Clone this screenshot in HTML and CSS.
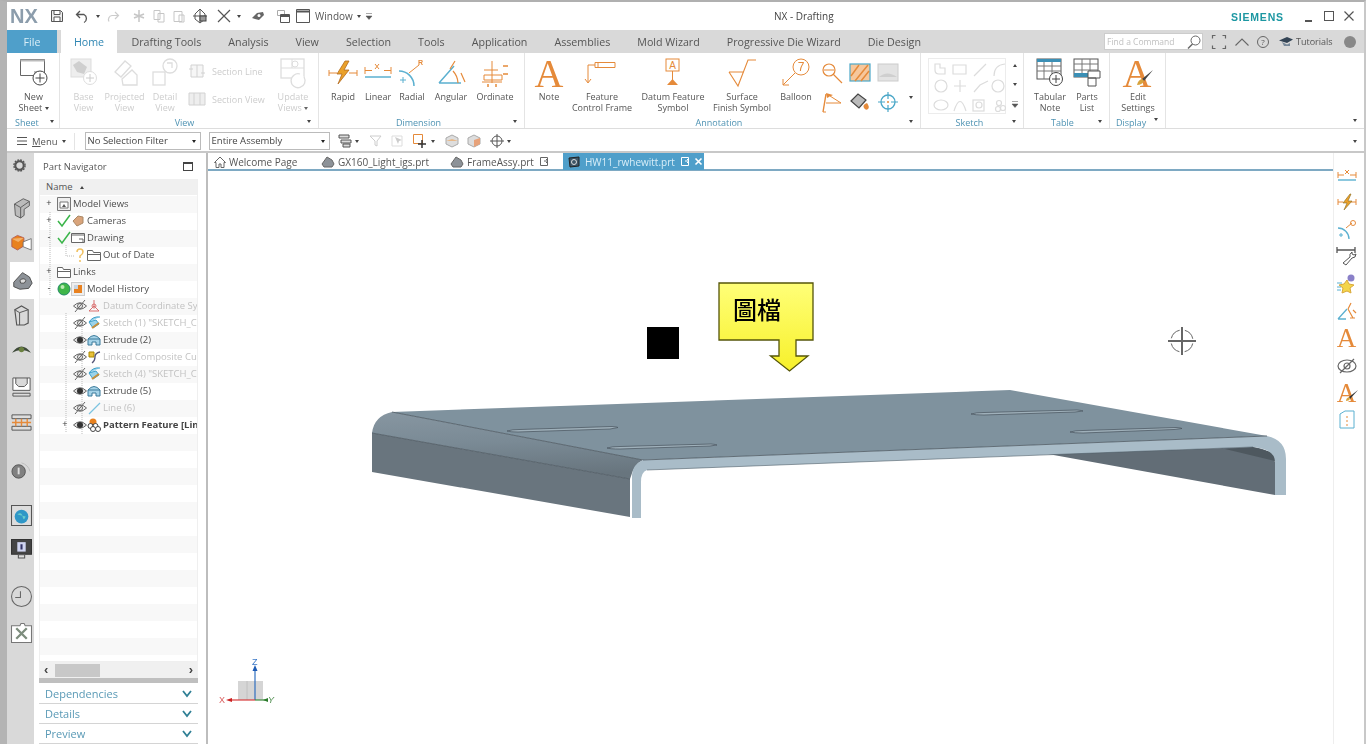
FILE: index.html
```html
<!DOCTYPE html>
<html lang="en">
<head>
<meta charset="utf-8">
<title>NX - Drafting</title>
<link rel="stylesheet" href="styles.css">
</head>
<body>
<div class="app">
  <header class="titlebar soft">
    <span class="nx">NX</span>
    <div class="qat">
      <svg class="q q-save" viewBox="0 0 14 14"><path d="M1.500 1.500h9l2 2v9h-11z" fill="#eee" stroke="#555"/><path d="M4 2v3.500h6V2M4 12V8h6v4" fill="#fff" stroke="#555"/></svg>
      <svg class="q q-undo" viewBox="0 0 16 14"><path d="M5 2 1.500 5.500 5 9M2 5.500h7a4.500 4.500 0 0 1 0 8" fill="none" stroke="#555" stroke-width="1.300"/></svg>
      <i class="caret q-c1"></i>
      <svg class="q q-redo" viewBox="0 0 14 14"><path d="M9 3l3.500 3.500L9 10M12 6.500H6a4 4 0 0 0-3 6" fill="none" stroke="#ccc" stroke-width="1.200"/></svg>
      <svg class="q q-cut" viewBox="0 0 14 14"><path d="M7 1v12M2 5l10 4M2 9l10-4" fill="none" stroke="#c6c6c6" stroke-width="1.500"/></svg>
      <svg class="q q-copy" viewBox="0 0 14 14"><path d="M2 1.500h6v9H2zM6 4.500h6v8.500H6z" fill="#fff" stroke="#c6c6c6"/></svg>
      <svg class="q q-paste" viewBox="0 0 14 14"><path d="M2 2.500h8v10H2zM7 6h5v7H7z" fill="#fff" stroke="#c6c6c6"/></svg>
      <svg class="q q-move" viewBox="0 0 16 16"><path d="M8 1v14M1 8h14M8 1 3 6v5l5 4 5-4V6z" fill="none" stroke="#555"/><rect x="8" y="8" width="6" height="5" fill="#999" stroke="#444"/></svg>
      <svg class="q q-x" viewBox="0 0 14 14"><path d="M1 1l12 12M13 1 1 13" stroke="#555" stroke-width="1.200"/></svg>
      <i class="caret q-c2"></i>
      <svg class="q q-eye" viewBox="0 0 14 12"><path d="M1 8l5-5 6-1 1 3-5 5-4-1z" fill="#666"/><circle cx="8" cy="5.500" r="1.500" fill="#fff"/></svg>
      <svg class="q q-win1" viewBox="0 0 14 14"><path d="M1.500 1.500h7v5h-7z" fill="#fff" stroke="#aaa"/><path d="M4.500 5.500h9v8h-9z" fill="#fff" stroke="#555"/><path d="M4.500 7h9" stroke="#555" stroke-width="2"/></svg>
      <svg class="q q-win2" viewBox="0 0 14 14"><path d="M.5.500h13v13H.5z" fill="#fff" stroke="#555"/><path d="M.5 2.500h13" stroke="#555" stroke-width="2"/></svg>
      <span class="win-label">Window</span>
      <i class="caret q-c3"></i>
      <svg class="q q-more" viewBox="0 0 6 7"><path d="M0 .5h6M0 3h6L3 6.500z" fill="#555" stroke="#555" stroke-width=".5"/></svg>
    </div>
    <span class="doc-title">NX - Drafting</span>
    <span class="siemens">SIEMENS</span>
    <div class="win-ctrl">
      <span class="min"></span>
      <span class="max"></span>
      <svg class="close" viewBox="0 0 10 10"><path d="M.5.500l9 9M9.500.500l-9 9" stroke="#555" stroke-width="1.200"/></svg>
    </div>
  </header>

  <nav class="tabbar soft">
    <span class="tab file">File</span>
    <span class="tab home">Home</span>
    <span class="tab">Drafting Tools</span>
    <span class="tab">Analysis</span>
    <span class="tab">View</span>
    <span class="tab">Selection</span>
    <span class="tab">Tools</span>
    <span class="tab">Application</span>
    <span class="tab">Assemblies</span>
    <span class="tab">Mold Wizard</span>
    <span class="tab">Progressive Die Wizard</span>
    <span class="tab">Die Design</span>
    <div class="tab-right">
      <div class="search"><span>Find a Command</span>
        <svg class="s-ico" viewBox="0 0 14 14"><circle cx="8.500" cy="5.500" r="4.500" fill="#fff" stroke="#666"/><path d="M5.500 9 1 13.500" stroke="#666" stroke-width="1.500"/></svg>
      </div>
      <svg class="r-full" viewBox="0 0 14 14"><path d="M.5 3.500v-3h3M10.500.500h3v3M.5 10.500v3h3M10.500 13.500h3v-3" fill="none" stroke="#666" stroke-width="1.200"/></svg>
      <svg class="r-up" viewBox="0 0 14 8"><path d="M.5 7.500 7 1l6.500 6.500" fill="none" stroke="#666" stroke-width="1.100"/></svg>
      <span class="r-help">?</span>
      <svg class="r-hat" viewBox="0 0 14 10"><path d="M0 3.500 8 0l6 2.500L8 6z" fill="#345"/><path d="M3 5l5 2.500 3-1.500v3H5z" fill="#789"/></svg>
      <span class="r-tut">Tutorials</span>
      <span class="r-dot"></span>
    </div>
  </nav>

  <section class="ribbon soft">
    <div class="group g-sheet">
      <div class="items">
        <div class="big w53">
          <svg class="ico" viewBox="0 0 30 30"><path d="M1.500 1.500h24v16h-24z" fill="#fff" stroke="#666"/><path d="M1.500 1.500h24v2h-24z" fill="#bbb"/><rect x="15" y="13" width="9" height="5" fill="#bbb"/><circle cx="21" cy="20" r="7" fill="#fff" stroke="#444"/><path d="M21 15.500v9M16.500 20h9" stroke="#444"/></svg>
          <span class="lbl">New<br>Sheet <b class="tri"></b></span>
        </div>
      </div>
      <div class="g-label">Sheet<i class="caret g-c"></i></div>
    </div>
    <div class="group g-view">
      <div class="items">
        <div class="big w41 off">
          <svg class="ico" viewBox="0 0 30 30"><rect x="2" y="1" width="20" height="18" fill="#eee" stroke="#ddd"/><path d="M4 7l6-4 8 6-3 7-7-2z" fill="#cfcfcf"/><circle cx="21" cy="20" r="6.500" fill="#fff" stroke="#ddd"/><path d="M21 16v8M17 20h8" stroke="#ccc"/></svg>
          <span class="lbl">Base<br>View</span>
        </div>
        <div class="big w41 off">
          <svg class="ico" viewBox="0 0 30 30"><path d="M5 14 15 3l6 5-10 11zM12 21l10-9 5 5v10H13z" fill="#fff" stroke="#ddd" stroke-width="1.300"/></svg>
          <span class="lbl">Projected<br>View</span>
        </div>
        <div class="big w40 off">
          <svg class="ico" viewBox="0 0 30 30"><rect x="3" y="14" width="12" height="13" fill="#fff" stroke="#ddd" stroke-width="1.300"/><circle cx="20" cy="8" r="7" fill="#fff" stroke="#ddd" stroke-width="1.300"/><path d="M17 5h5v5" fill="none" stroke="#ddd" stroke-width="1.300"/></svg>
          <span class="lbl">Detail<br>View</span>
        </div>
        <div class="small-col w82 off">
          <div class="sm"><svg class="si" viewBox="0 0 18 14"><path d="M3 1h12v12H3z M1 5h4M13 9h4M9 1v12" fill="#f6f6f6" stroke="#d2d2d2"/></svg><span>Section Line</span></div>
          <div class="sm"><svg class="si" viewBox="0 0 18 14"><path d="M1 1h16v12H1zM6 1v12M12 1v12" fill="#eee" stroke="#d2d2d2"/></svg><span>Section View</span></div>
        </div>
        <div class="big w52 off">
          <svg class="ico" viewBox="0 0 30 30"><rect x="3" y="1" width="23" height="19" fill="#fff" stroke="#ddd" stroke-width="1.300"/><path d="M3 10h23M14 1v9" stroke="#ddd"/><circle cx="17" cy="6" r="3" fill="none" stroke="#ddd"/><path d="M26 19a7 7 0 1 1-4-3" fill="#fff" stroke="#ddd" stroke-width="1.300"/></svg>
          <span class="lbl">Update<br>Views <b class="tri"></b></span>
        </div>
      </div>
      <div class="g-label">View<i class="caret g-c"></i></div>
    </div>
    <div class="group g-dim">
      <div class="items">
        <div class="big w36">
          <svg class="ico" viewBox="0 0 30 30"><path d="M1 15h8M21 15h8M1 12v6M29 12v6" stroke="#e58a3a"/><path d="M17 3 9 16h5l-4 10 11-14h-5l5-9z" fill="#eaa12a" stroke="#b36a20" stroke-width=".8"/></svg>
          <span class="lbl">Rapid</span>
        </div>
        <div class="big w34">
          <svg class="ico" viewBox="0 0 30 30"><path d="M2 19h26" stroke="#5bb0d0" stroke-width="1.500"/><path d="M2 9v7M28 9v7M2 12.500h7M21 12.500h7" stroke="#e58a3a"/><path d="M12 6l4 5M16 6l-4 5" stroke="#e58a3a"/></svg>
          <span class="lbl">Linear</span>
        </div>
        <div class="big w34">
          <svg class="ico" viewBox="0 0 30 30"><path d="M2 13a15 15 0 0 1 15 15" fill="none" stroke="#5bb0d0" stroke-width="1.500"/><path d="M12 15 22 7" stroke="#e58a3a"/><path d="M3 22h6M6 19v6" stroke="#5bb0d0"/><text x="21" y="7" class="svgt">R</text></svg>
          <span class="lbl">Radial</span>
        </div>
        <div class="big w44">
          <svg class="ico" viewBox="0 0 30 30"><path d="M3 25 18 8M3 25h22" stroke="#5bb0d0" stroke-width="1.500"/><path d="M22 25a19 19 0 0 0-5-12M19 3l-5 8M25 15l4 9" fill="none" stroke="#e58a3a" stroke-width="1.200"/></svg>
          <span class="lbl">Angular</span>
        </div>
        <div class="big w44">
          <svg class="ico" viewBox="0 0 30 30"><path d="M4 17h18v5H4z" fill="none" stroke="#e58a3a"/><path d="M2 24h20M12 3v22M4 12h14" stroke="#e58a3a"/><path d="M8 26v3M16 26v3M23 8h5M23 16h5" stroke="#e58a3a" stroke-width="1.500"/></svg>
          <span class="lbl">Ordinate</span>
        </div>
      </div>
      <div class="g-label">Dimension<i class="caret g-c"></i></div>
    </div>
    <div class="group g-ann">
      <div class="items">
        <div class="big w38">
          <svg class="ico" viewBox="0 0 30 30"><text x="15" y="29" class="svg-note">A</text></svg>
          <span class="lbl">Note</span>
        </div>
        <div class="big w68">
          <svg class="ico" viewBox="0 0 30 30"><path d="M8 4.500h20v5H8z" fill="#fff" stroke="#e58a3a"/><path d="M11 4v6" stroke="#e58a3a"/><path d="M8 7H1v17M-2 21l3 4 3-4" fill="none" stroke="#e58a3a"/></svg>
          <span class="lbl">Feature<br>Control Frame</span>
        </div>
        <div class="big w74">
          <svg class="ico" viewBox="0 0 30 30"><rect x="8" y="1" width="13" height="12" fill="#fff" stroke="#e58a3a"/><text x="14.500" y="11" class="svga">A</text><path d="M14.500 13v9" stroke="#e58a3a"/><path d="M9 27l5.500-6 5.500 6z" fill="#e58a3a"/></svg>
          <span class="lbl">Datum Feature<br>Symbol</span>
        </div>
        <div class="big w64">
          <svg class="ico" viewBox="0 0 30 30"><path d="M2 14l9 14L21 2h8M2 14h15" fill="none" stroke="#e58a3a" stroke-width="1.100"/></svg>
          <span class="lbl">Surface<br>Finish Symbol</span>
        </div>
        <div class="big w44">
          <svg class="ico" viewBox="0 0 30 30"><circle cx="20" cy="9" r="8" fill="#fff" stroke="#e58a3a"/><text x="20" y="13" class="svgb">7</text><path d="M14 15 2 27M2 21v6h6" fill="none" stroke="#e58a3a"/></svg>
          <span class="lbl">Balloon</span>
        </div>
        <div class="grid-mini">
          <svg class="mini" viewBox="0 0 22 22"><circle cx="8" cy="8" r="6" fill="none" stroke="#e58a3a" stroke-width="1.200"/><path d="M3 8h10M12 12l9 9" stroke="#e58a3a" stroke-width="1.200"/></svg>
          <svg class="mini" viewBox="0 0 22 22"><rect x="1" y="2" width="20" height="17" fill="#f6c79c" stroke="#4ba7c8" stroke-width="1.200"/><path d="M2 14 10 3M6 19 19 3M12 19l8-10" stroke="#e58a3a" stroke-width="1.500"/></svg>
          <svg class="mini" viewBox="0 0 22 22"><rect x="1" y="2" width="20" height="17" fill="#e3e3e3" stroke="#ccc"/><path d="M2 15q8-7 18 0" fill="#cfcfcf"/></svg>
          <svg class="mini" viewBox="0 0 22 22"><path d="M2 21 5 3" stroke="#e58a3a" stroke-width="1.400"/><path d="M5 2l7 2-6 3z" fill="#e58a3a"/><path d="M9 5l11 7H5" fill="#fff" stroke="#e58a3a"/><path d="M2 21h3" stroke="#e58a3a"/></svg>
          <svg class="mini" viewBox="0 0 22 22"><path d="M2 10l7-7 8 6-7 8z" fill="#bbb" stroke="#444" stroke-width="1.200"/><path d="M18 12q3 4 1 6t-4-1 3-5z" fill="#e58a3a"/></svg>
          <svg class="mini" viewBox="0 0 22 22"><circle cx="11" cy="11" r="7" fill="#fff" stroke="#4ba7c8" stroke-width="1.300"/><path d="M11 1v7M11 14v7M1 11h7M14 11h7" stroke="#4ba7c8" stroke-width="1.200"/><circle cx="11" cy="11" r="1" fill="#e58a3a"/></svg>
        </div>
        <i class="caret a-more"></i>
      </div>
      <div class="g-label">Annotation<i class="caret g-c"></i></div>
    </div>
    <div class="group g-sk">
      <div class="items">
        <div class="sk-box">
          <svg class="sk-ico" viewBox="0 0 76 54"><g fill="none" stroke="#dcdcdc" stroke-width="1.200"><path d="M5 5v6q0 4 4 4h6v-6h-5V5zM23 6h13v9H23zM44 17 56 5M64 17q0-11 11-12"/><circle cx="11" cy="27" r="6"/><path d="M24 27h12M30 21v12M44 33l6-7 8-4"/><circle cx="68" cy="27" r="6"/><ellipse cx="11" cy="46" rx="7" ry="5"/><path d="M24 52q6-19 12 0"/><rect x="43" y="41" width="11" height="11"/><circle cx="49" cy="46" r="3"/><circle cx="69" cy="44" r="2.500"/><circle cx="73" cy="49" r="2.500"/><circle cx="68" cy="50" r="2.500"/></g></svg>
        </div>
        <div class="sk-arrows"><i class="caret up"></i><i class="caret"></i><svg class="sk-m" viewBox="0 0 6 7"><path d="M0 .5h6M0 3h6L3 6.500z" fill="#555" stroke="#555" stroke-width=".5"/></svg></div>
      </div>
      <div class="g-label">Sketch<i class="caret g-c"></i></div>
    </div>
    <div class="group g-table">
      <div class="items">
        <div class="big w44">
          <svg class="ico" viewBox="0 0 30 30"><rect x="2" y="1" width="24" height="20" fill="#fff" stroke="#555"/><rect x="2" y="1" width="24" height="3" fill="#3b8fb5"/><path d="M2 8h24M2 13h24M9 4v17M17 4v17" stroke="#777"/><circle cx="21" cy="21" r="6.500" fill="#fff" stroke="#444"/><path d="M21 17v8M17 21h8" stroke="#444"/></svg>
          <span class="lbl">Tabular<br>Note</span>
        </div>
        <div class="big w30">
          <svg class="ico" viewBox="0 0 30 30"><rect x="2" y="1" width="24" height="18" fill="#fff" stroke="#555"/><path d="M2 6h24M2 12h24M10 1v18M18 1v18" stroke="#777"/><rect x="2" y="15" width="16" height="4" fill="#3b8fb5"/><path d="M16 13h12v7H16zM16 20h8v8h-8z" fill="#fff" stroke="#555"/></svg>
          <span class="lbl">Parts<br>List</span>
        </div>
      </div>
      <div class="g-label">Table<i class="caret g-c"></i></div>
    </div>
    <div class="group g-disp">
      <div class="items">
        <div class="big w56">
          <svg class="ico" viewBox="0 0 30 30"><text x="14" y="29" class="svg-note">A</text><path d="M30 12 19 21l2 2z" fill="#444"/><path d="M19 21q-4 1-5 6 5 0 7-4z" fill="#d8a33d"/></svg>
          <span class="lbl">Edit<br>Settings</span>
        </div>
      </div>
      <div class="g-label">Display<i class="caret g-c"></i></div>
    </div>
    <i class="caret rib-more"></i>
  </section>

  <section class="selbar soft">
    <svg class="menu-ico" viewBox="0 0 10 8"><path d="M0 .5h10M0 4h10M0 7.500h10" stroke="#555"/></svg>
    <span class="menu-lbl"><u>M</u>enu</span><i class="caret"></i>
    <span class="sep"></span>
    <div class="combo c1">No Selection Filter<i class="caret dk"></i></div>
    <div class="combo c2">Entire Assembly<i class="caret dk"></i></div>
    <svg class="sb sb1" viewBox="0 0 14 14"><path d="M1 1h10v3H1zM3 6h10v3H3zM5 10h7v3H5z" fill="#ddd" stroke="#555"/></svg><i class="caret"></i>
    <svg class="sb sb2" viewBox="0 0 14 14"><path d="M1 2h11L8 7v5l-2-1V7z" fill="none" stroke="#ccc"/></svg>
    <svg class="sb sb3" viewBox="0 0 14 14"><path d="M2 2h10v10H2z" fill="none" stroke="#ddd"/><path d="M5 3l3 7 1-3 3-1z" fill="#ccc"/></svg>
    <svg class="sb sb4" viewBox="0 0 16 16"><path d="M1.500 1.500h9v9h-9z" fill="#fff" stroke="#e58a3a"/><path d="M10 7v8M6 11h8" stroke="#333" stroke-width="1.500"/></svg><i class="caret"></i>
    <svg class="sb sb5" viewBox="0 0 14 14"><path d="M7 1l6 3v6l-6 3-6-3V4z" fill="#ddd" stroke="#aaa"/><path d="M1 7l6-2 6 2" fill="#e7b98a"/></svg>
    <svg class="sb sb6" viewBox="0 0 14 14"><path d="M7 1l6 3v6l-6 3-6-3V4z" fill="#ddd" stroke="#aaa"/><path d="M7 6l6-2v6l-6 3z" fill="#e7a27a"/></svg>
    <svg class="sb sb7" viewBox="0 0 14 14"><circle cx="7" cy="7" r="5" fill="none" stroke="#555"/><path d="M7 0v14M0 7h14" stroke="#555"/></svg><i class="caret"></i>
    <i class="caret sel-more"></i>
  </section>

  <main class="main">
    <aside class="rail soft">
      <div class="rb"><svg class="rail-g" viewBox="0 0 14 14"><circle cx="7" cy="7" r="4.500" fill="none" stroke="#555" stroke-width="2.200"/><circle cx="7" cy="7" r="6" fill="none" stroke="#555" stroke-width="1.500" stroke-dasharray="2 1.140"/></svg></div>
      <div class="rb"><svg class="ri" viewBox="0 0 22 24"><path d="M3 8l10-6 7 3v5l-6 4v7l-4 3-6-3z" fill="#bbb" stroke="#555"/><path d="M3 8l7 4 10-7M10 12v12" fill="none" stroke="#555"/></svg></div>
      <div class="rb"><svg class="ri" viewBox="0 0 26 24"><path d="M1 6l7-4 8 3v10l-8 5-7-4z" fill="#e8811f" stroke="#a55"/><path d="M1 6l8 4 7-5" fill="#f2b06a"/><path d="M15 10l10-4v14l-10-4z" fill="#fff" stroke="#666"/></svg></div>
      <div class="rb rail-act"><svg class="ri" viewBox="0 0 24 22"><path d="M2 13 12 2l8 5 3 7-4 6-10 1-7-3z" fill="#8d9298" stroke="#444"/><path d="M9 11q4-4 7 0l-2 3h-4z" fill="#ddd" stroke="#444"/></svg></div>
      <div class="rb"><svg class="ri" viewBox="0 0 18 22"><path d="M2 5l7-4 7 4v14l-4 2H4z" fill="none" stroke="#555" stroke-width="1.200"/><path d="M2 5l5 3v13M7 8l9-3" fill="none" stroke="#555"/></svg></div>
      <div class="rb"><svg class="ri" viewBox="0 0 20 12"><path d="M1 10q9-12 18 0-9-5-18 0z" fill="#3e4a3a"/><circle cx="10" cy="7" r="2.500" fill="#6a8040"/></svg></div>
      <div class="rb"><svg class="ri" viewBox="0 0 20 22"><path d="M1 1h18v13H1zM4 1v6l3 3h6l3-3V1" fill="#fff" stroke="#555"/><path d="M1 17h18v3H1z" fill="#ddd" stroke="#555"/></svg></div>
      <div class="rb"><svg class="ri" viewBox="0 0 22 18"><path d="M1 1h20v4H1zM1 13h20v4H1z" fill="#ddd" stroke="#555"/><path d="M1 9h20M5 5v8M11 5v8M17 5v8" stroke="#e58a3a" stroke-width="1.500"/></svg></div>
      <div class="rb"><svg class="ri" viewBox="0 0 22 20"><circle cx="8" cy="11" r="7" fill="#808080" stroke="#555"/><path d="M8 7v7" stroke="#ddd" stroke-width="2"/><path d="M11 2q7 2 9 9" fill="none" stroke="#bbb"/></svg></div>
      <div class="rb"><svg class="ri" viewBox="0 0 20 20"><path d="M.5.500h19v19H.5z" fill="#ddd" stroke="#555"/><circle cx="10" cy="11" r="6.500" fill="#2f97c7"/><path d="M6 9q4-3 5 2t3 0" fill="#6cc"/></svg></div>
      <div class="rb"><svg class="ri" viewBox="0 0 20 20"><path d="M.5.500h19v14H.5z" fill="#444" stroke="#333"/><rect x="6" y="3" width="8" height="9" fill="#cfd4f0"/><path d="M9 5h2v5H9z" fill="#336"/><path d="M7 15h6v3H7z" fill="#ddd" stroke="#555"/></svg></div>
      <div class="rb"><svg class="ri" viewBox="0 0 20 20"><circle cx="10" cy="10" r="9.500" fill="none" stroke="#666"/><path d="M9 5v6H4" fill="none" stroke="#666"/></svg></div>
      <div class="rb"><svg class="ri" viewBox="0 0 20 20"><path d="M.5 3.500h8l1-2h3l1 2h6v16H.5z" fill="#fff" stroke="#777"/><path d="M5 6l10 10M15 6 5 16" stroke="#7d8d7d" stroke-width="2.200"/></svg></div>
    </aside>

    <section class="nav soft">
      <div class="nav-head"><span>Part Navigator</span><span class="nav-max"></span></div>
      <div class="tree">
        <div class="tree-head">Name <i class="caret up dk"></i></div>
        <svg class="tree-lines" viewBox="0 0 60 240"><path d="M9 17v84M41 130v110M25 50v11h9M25 118v120" fill="none" stroke="#bbb" stroke-dasharray="1 1"/></svg>
        <div class="row r0"><b class="exp">+</b><svg class="ti" viewBox="0 0 14 14"><path d="M.5.500h13v13H.5z" fill="#eee" stroke="#777"/><path d="M3 5h8v6H3z" fill="#fff" stroke="#777"/><path d="M5 10l2-3 2 3z" fill="#555"/></svg><span>Model Views</span></div>
        <div class="row r0"><b class="exp">+</b><svg class="ti" viewBox="0 0 14 14"><path d="M1 7l4 5 8-11" fill="none" stroke="#3bb54a" stroke-width="1.500"/></svg><svg class="ti" viewBox="0 0 14 14"><path d="M2 7l5-5 5 1v6l-6 3z" fill="#d9a47b" stroke="#a86"/></svg><span>Cameras</span></div>
        <div class="row r0"><b class="exp">-</b><svg class="ti" viewBox="0 0 14 14"><path d="M1 7l4 5 8-11" fill="none" stroke="#3bb54a" stroke-width="1.500"/></svg><svg class="ti" viewBox="0 0 14 14"><path d="M.5 2.500h13v9H.5z" fill="#fff" stroke="#666"/><path d="M.5 4h13M8 8h4v3" fill="none" stroke="#666"/></svg><span>Drawing</span></div>
        <div class="row r2"><svg class="ti" viewBox="0 0 14 14"><path d="M4 4q0-3 3-3t3 3q0 2-3 4v2" fill="none" stroke="#f0c060" stroke-width="1.500"/><circle cx="7" cy="13" r="1" fill="#f0c060"/></svg><svg class="ti" viewBox="0 0 14 14"><path d="M.5 2.500h5l1 2h7v8H.5z M.5 6.500h13" fill="#fff" stroke="#666"/></svg><span>Out of Date</span></div>
        <div class="row r0"><b class="exp">+</b><svg class="ti" viewBox="0 0 14 14"><path d="M.5 2.500h5l1 2h7v8H.5z M.5 6.500h13" fill="#fff" stroke="#666"/></svg><span>Links</span></div>
        <div class="row r0"><b class="exp">-</b><svg class="ti" viewBox="0 0 14 14"><circle cx="7" cy="7" r="6" fill="#3fb649" stroke="#286"/><circle cx="5.500" cy="5" r="2" fill="#bdeab5"/></svg><svg class="ti" viewBox="0 0 14 14"><rect x=".5" y=".5" width="13" height="13" fill="#eee" stroke="#ccc"/><path d="M3 3h8v8H3z" fill="#e8811f"/><path d="M3 3h4v4H3z" fill="#c9d4e0"/></svg><span>Model History</span></div>
        <div class="row r2 dim"><svg class="ti" viewBox="0 0 14 14"><use href="#eyeoff"/></svg><svg class="ti" viewBox="0 0 14 14"><path d="M7 1v6L2 12M7 7l5 5M2 12h10" fill="none" stroke="#d96f6f"/><circle cx="7" cy="7" r="2" fill="none" stroke="#d96f6f"/></svg><span>Datum Coordinate Sy</span></div>
        <div class="row r2 dim"><svg class="ti" viewBox="0 0 14 14"><use href="#eyeoff"/></svg><svg class="ti" viewBox="0 0 14 14"><path d="M2 6q4-6 11-5M2 6l4 6 6-4-3-4z" fill="#9ad3ea" stroke="#3d9fca"/><path d="M5 12l7-5" stroke="#c98f3a" stroke-width="2"/></svg><span>Sketch (1) "SKETCH_C</span></div>
        <div class="row r2"><svg class="ti" viewBox="0 0 14 14"><use href="#eyeon"/></svg><svg class="ti" viewBox="0 0 14 14"><use href="#extr"/></svg><span>Extrude (2)</span></div>
        <div class="row r2 dim"><svg class="ti" viewBox="0 0 14 14"><use href="#eyeoff"/></svg><svg class="ti" viewBox="0 0 14 14"><path d="M2 2h5v5H2z" fill="#e9c13b" stroke="#a80"/><path d="M5 13q3-2 3-6t5-5" fill="none" stroke="#557" stroke-width="1.300"/></svg><span>Linked Composite Cu</span></div>
        <div class="row r2 dim"><svg class="ti" viewBox="0 0 14 14"><use href="#eyeoff"/></svg><svg class="ti" viewBox="0 0 14 14"><path d="M2 6q4-6 11-5M2 6l4 6 6-4-3-4z" fill="#9ad3ea" stroke="#3d9fca"/><path d="M5 12l7-5" stroke="#c98f3a" stroke-width="2"/></svg><span>Sketch (4) "SKETCH_C</span></div>
        <div class="row r2"><svg class="ti" viewBox="0 0 14 14"><use href="#eyeon"/></svg><svg class="ti" viewBox="0 0 14 14"><use href="#extr"/></svg><span>Extrude (5)</span></div>
        <div class="row r2 dim"><svg class="ti" viewBox="0 0 14 14"><use href="#eyeoff"/></svg><svg class="ti" viewBox="0 0 14 14"><path d="M2 13 13 2" stroke="#7cc3e0" stroke-width="1.300"/></svg><span>Line (6)</span></div>
        <div class="row r1 strong"><b class="exp">+</b><svg class="ti" viewBox="0 0 14 14"><use href="#eyeon"/></svg><svg class="ti" viewBox="0 0 14 14"><circle cx="6" cy="4" r="3.500" fill="#e8811f"/><g fill="#fff" stroke="#444"><circle cx="3.500" cy="8" r="2.500"/><circle cx="8.500" cy="8" r="2.500"/><circle cx="6" cy="11" r="2.500"/><circle cx="11" cy="11" r="2.500"/></g></svg><span>Pattern Feature [Lin</span></div>
      </div>
      <div class="hscroll"><span class="arrow">&#8249;</span><span class="thumb"></span><span class="arrow">&#8250;</span></div>
      <div class="hbar"></div>
      <div class="acc"><span>Dependencies</span><svg class="chev" viewBox="0 0 10 7"><path d="M1 1l4 5 4-5" fill="none" stroke="#2f7f95" stroke-width="1.800"/></svg></div>
      <div class="acc"><span>Details</span><svg class="chev" viewBox="0 0 10 7"><path d="M1 1l4 5 4-5" fill="none" stroke="#2f7f95" stroke-width="1.800"/></svg></div>
      <div class="acc"><span>Preview</span><svg class="chev" viewBox="0 0 10 7"><path d="M1 1l4 5 4-5" fill="none" stroke="#2f7f95" stroke-width="1.800"/></svg></div>
    </section>

    <section class="work">
      <div class="doctabs soft">
        <div class="dt d1"><svg class="dti" viewBox="0 0 12 12"><path d="M6 1 .5 6.500H2V11.500h3V8h2v3.500h3v-5h1.500z" fill="#fff" stroke="#666"/></svg><span>Welcome Page</span></div>
        <div class="dt d2"><svg class="dti w14" viewBox="0 0 14 12"><path d="M1 8l5-7 5 3 2 4-2 3H3z" fill="#8d9298" stroke="#666"/></svg><span>GX160_Light_igs.prt</span></div>
        <div class="dt d3"><svg class="dti w14" viewBox="0 0 14 12"><path d="M1 8l5-7 5 3 2 4-2 3H3z" fill="#8d9298" stroke="#666"/></svg><span>FrameAssy.prt</span><svg class="dts" viewBox="0 0 10 11"><path d="M1.500 1.500h7v8h-7z" fill="#fff" stroke="#666"/><path d="M5 5h4M7 3l2 2-2 2" fill="none" stroke="#666"/></svg></div>
        <div class="dt active"><svg class="dti w14" viewBox="0 0 14 12"><path d="M1 2l10-1v9l-9 1z" fill="#3d5566" stroke="#222"/><circle cx="6" cy="6" r="2.500" fill="none" stroke="#ddd"/></svg><span>HW11_rwhewitt.prt</span><svg class="dts" viewBox="0 0 10 11"><path d="M1.500 1.500h7v8h-7z" fill="#4a9cc7" stroke="#fff"/><path d="M5 5h4M7 3l2 2-2 2" fill="none" stroke="#fff"/></svg><svg class="dtx" viewBox="0 0 9 9"><path d="M1.500 1.500l6 6M7.500 1.500l-6 6" stroke="#fff" stroke-width="1.600"/></svg></div>
      </div>
      <div class="canvas">
        <svg class="model" viewBox="208 171 1125 573">
          <defs>
            <linearGradient id="bend" x1="0" y1="0" x2="0.12" y2="1"><stop offset="0" stop-color="#8796a1"/><stop offset=".5" stop-color="#7a8a95"/><stop offset="1" stop-color="#68757e"/></linearGradient>
          </defs>
          <path d="M392 412 1010 390 1267 436 643 460Z" fill="#7f929e"/>
          <path d="M372 433Q374 416 392 412L643 460Q634 464 630 479Z" fill="url(#bend)"/>
          <path d="M372 433 630 479 630 517 372 472Z" fill="#69757e"/>
          <path d="M372 433 630 479M392 412 643 460" stroke="#4c5861" stroke-width=".8" fill="none"/>
          <path d="M1048 454 1253 447Q1272 449 1275 462V495Z" fill="#626d76"/>
          <path d="M1225 449 1275 461V453L1253 447Z" fill="#4e585f"/>
          <path d="M643 460 1267 436Q1286 440 1286 459V495H1275V461Q1274 449 1253 447L647 470Q641 472 641 482V518H632V475Q632 465 643 460Z" fill="#a9bcc8"/>
          <path d="M643 460 1267 436" stroke="#4c5861" stroke-width=".8" fill="none"/>
          <path d="M647 470 1253 447" stroke="#50606a" stroke-width=".6" fill="none"/>
          <g fill="#9fb0ba" stroke="#46525b" stroke-width=".7">
            <path d="M507 431Q512 429.500 520 429.500L612 426.500Q618 427 618 427.500L610 429 518 432Q510 432 507 431Z"/>
            <path d="M607 448Q612 446.500 620 446.500L711 444Q717 444.500 717 445L710 446 620 449Q610 449 607 448Z"/>
            <path d="M971 414Q976 412.500 984 412.500L1077 410Q1083 410.500 1083 411L1075 412 984 415Q975 415 971 414Z"/>
            <path d="M1070 432Q1075 430.500 1083 430.500L1176 427.500Q1182 428 1182 428.500L1174 429.500 1083 433Q1074 433 1070 432Z"/>
          </g>
          <rect x="647" y="327" width="32" height="32" fill="#000"/>
          <g fill="none" stroke="#666">
            <circle cx="1182" cy="341" r="11" stroke-dasharray="12 5.300" stroke-dashoffset="-2.500"/>
            <path d="M1182 327v28M1168 341h28" stroke-width="2"/>
          </g>
          <g class="soft">
            <path d="M238 681h25v19h-25z" fill="#d5d5d5"/>
            <path d="M247 681v19" stroke="#c0c0c0"/>
            <path d="M255 670v30" stroke="#2f6fc0" stroke-width="1.200"/>
            <path d="M255 665l-2.500 6h5z" fill="#1d5bb5"/>
            <path d="M229 700h26" stroke="#d73b3b" stroke-width="1.200"/>
            <path d="M226 700l6-2v4z" fill="#c22"/>
            <path d="M255 700h13" stroke="#3d8a3d" stroke-width="1.200"/>
            <path d="M268 698l-5 2 5 2z" fill="#2a7a2a"/>
          </g>
        </svg>
        <span class="ax ax-z">Z</span><span class="ax ax-x">X</span><span class="ax ax-y">Y</span>
        <div class="callout">
          <svg class="callout-shape" viewBox="0 0 98 92">
            <defs><linearGradient id="yel" x1="0" y1="0" x2="0" y2="1"><stop offset="0" stop-color="#ffff78"/><stop offset="1" stop-color="#f7f02a"/></linearGradient></defs>
            <path d="M1 1H95V58H78V74H90L71.500 89 52.500 74H61V58H1Z" fill="url(#yel)" stroke="#55550a" stroke-width="1.300"/>
          </svg>
          <span class="callout-text">圖檔</span>
        </div>
      </div>
    </section>

    <aside class="rtools soft">
      <svg class="rt" viewBox="0 0 20 20"><path d="M1 15h18" stroke="#5bb0d0" stroke-width="1.400"/><path d="M1 7v6M19 7v6M1 10h6M13 10h6M8 5l4 4M12 5 8 9" stroke="#e58a3a"/></svg>
      <svg class="rt" viewBox="0 0 20 20"><path d="M1 10h5M14 10h5M1 7v6M19 7v6" stroke="#e58a3a"/><path d="M13 2 6 11h4l-3 7 8-9h-4l3-7z" fill="#eaa12a" stroke="#8a6a20" stroke-width=".6"/></svg>
      <svg class="rt" viewBox="0 0 20 20"><path d="M1 9a11 11 0 0 1 11 11" fill="none" stroke="#5bb0d0" stroke-width="1.300"/><path d="M9 9l6-5" stroke="#e58a3a"/><circle cx="16" cy="4" r="2.500" fill="none" stroke="#e58a3a"/><path d="M2 16h4M4 14v4" stroke="#5bb0d0"/></svg>
      <svg class="rt" viewBox="0 0 20 20"><path d="M0 1v6M18 1v6M0 4h18" stroke="#555" stroke-width="1.300"/><path d="M15 6q-3 2-2 5l-7 6 3 2 6-7q4 0 4-4l-2 1-2-1z" fill="#fff" stroke="#555"/></svg>
      <svg class="rt" viewBox="0 0 20 20"><path d="M10 6l2 4 5 1-4 3 1 5-4-2-5 2 1-5-4-3 5-1z" fill="#f3d54b" stroke="#d9a83a"/><circle cx="14" cy="4" r="3.500" fill="#8a80c8"/><path d="M0 9h5M0 13h4M0 16h4" stroke="#5bb0d0"/></svg>
      <svg class="rt" viewBox="0 0 20 20"><path d="M1 18 10 8M1 18h8" stroke="#5bb0d0" stroke-width="1.300"/><path d="M14 2l-3 6M11 8l5 9M16 9l3 3M13 17h5" stroke="#e58a3a" stroke-width="1.200"/></svg>
      <span class="rt-a">A</span>
      <svg class="rt" viewBox="0 0 20 20"><ellipse cx="10" cy="10" rx="9" ry="6" fill="none" stroke="#666" stroke-width="1.200"/><circle cx="10" cy="10" r="3" fill="none" stroke="#666" stroke-width="1.200"/><path d="M3 17 17 3" stroke="#666" stroke-width="1.200"/></svg>
      <div class="rt-edit"><span class="rt-a">A</span><svg class="rt-br" viewBox="0 0 14 12"><path d="M13 1 4 8l1 2z" fill="#333"/><path d="M4 8q-3 1-3 4 3 0 4-2z" fill="#d8a33d"/></svg></div>
      <svg class="rt" viewBox="0 0 20 20"><path d="M3 4l5-3h9v17H3z" fill="#fff" stroke="#5bb0d0"/><path d="M10 6v2M10 10v2M10 14v2" stroke="#e58a3a"/></svg>
    </aside>
  </main>
</div>
<svg class="defs" aria-hidden="true">
  <symbol id="eyeon" viewBox="0 0 14 14"><path d="M.5 7Q7 .5 13.500 7 7 13.500.5 7z" fill="#ddd" stroke="#666"/><circle cx="7" cy="7" r="3" fill="#333"/></symbol>
  <symbol id="eyeoff" viewBox="0 0 14 14"><path d="M.5 7Q7 .5 13.500 7 7 13.500.5 7z" fill="#eee" stroke="#666"/><circle cx="7" cy="7" r="2.500" fill="none" stroke="#666"/><path d="M2 13 12 1" stroke="#666"/></symbol>
  <symbol id="extr" viewBox="0 0 14 14"><path d="M1 6q6-7 12 0v6H9V9H5v3H1z" fill="#a6d3e8" stroke="#39799a"/><path d="M1 6h12" stroke="#39799a"/></symbol>
</svg>
</body>
</html>
```
FILE: styles.css
```css
* { box-sizing: border-box; }
html, body { margin: 0; height: 100%; overflow: hidden; background: #fff; }
body { font-family: "Open Sans", "Noto Sans", sans-serif; color: #555; }
.app { width: 1366px; height: 744px; border-left: 7px solid #b4b4b4; border-top: 2px solid #b0b0b0; border-right: 2px solid #c8c8c8; display: flex; flex-direction: column; overflow: hidden; background: #fff; }
.soft { filter: blur(.35px); }
.defs { position: absolute; width: 0; height: 0; }
svg { display: block; flex: none; overflow: visible; }
.caret { display: inline-block; width: 0; height: 0; border-left: 2.5px solid transparent; border-right: 2.5px solid transparent; border-top: 3px solid #444; flex: none; }
.caret.up { border-top: 0; border-bottom: 3px solid #444; }

/* title bar */
.titlebar { height: 28px; display: flex; align-items: center; position: relative; flex: none; }
.nx { font: 700 20px "Liberation Sans", sans-serif; color: #8c9dac; margin-left: 3px; width: 40px; }
.qat { display: flex; align-items: center; height: 100%; }
.q { height: 14px; width: 14px; margin-right: 6px; }
.q-undo { width: 16px; margin-left: 5px; margin-right: 5px; }
.q-c1 { margin-right: 6px; }
.q-redo { margin-right: 12px; }
.q-move { width: 16px; height: 16px; margin-right: 9px; }
.q-x { margin-right: 6px; }
.q-c2 { margin-right: 10px; }
.q-eye { margin-right: 11px; }
.q-win2 { margin-right: 5px; }
.win-label { font-size: 10px; margin-right: 4px; }
.q-c3 { margin-right: 5px; }
.q-more { width: 6px; height: 7px; }
.doc-title { position: absolute; left: 767px; font-size: 10px; color: #444; top: 7px; }
.siemens { position: absolute; left: 1224px; top: 9px; font: 700 10.5px "Liberation Sans", sans-serif; color: #1c97a2; letter-spacing: .8px; }
.win-ctrl { position: absolute; left: 1298px; top: 0; height: 100%; display: flex; align-items: center; }
.min { width: 7px; height: 2px; background: #555; margin-top: 9px; margin-right: 12px; }
.max { width: 10px; height: 10px; border: 1px solid #555; margin-right: 10px; }
.close { width: 10px; height: 10px; }

/* ribbon tabs */
.tabbar { height: 23px; background: #d9d9d9; display: flex; align-items: center; flex: none; position: relative; }
.tab { font-size: 10.7px; padding: 0 13.5px; color: #555; height: 100%; line-height: 24px; white-space: nowrap; }
.tab.file { width: 50px; background: #4f9fca; color: #d9eef7; text-align: center; padding: 0; margin-right: 4px; }
.tab.home { background: #fff; color: #2f86b3; width: 56px; text-align: center; padding: 0; margin-right: 1px; }
.tab-right { position: absolute; left: 1097px; top: 0; height: 100%; display: flex; align-items: center; }
.search { width: 99px; height: 17px; background: #fff; border: 1px solid #ccc; display: flex; align-items: center; justify-content: space-between; padding: 0 1px 0 2px; font-size: 8.5px; color: #c0c0c0; white-space: nowrap; }
.s-ico { width: 14px; height: 14px; }
.r-full { width: 14px; height: 14px; margin-left: 9px; }
.r-up { width: 14px; height: 8px; margin-left: 9px; }
.r-help { width: 12px; height: 12px; border: 1px solid #666; border-radius: 50%; font-size: 8px; line-height: 10px; text-align: center; margin-left: 8px; }
.r-hat { width: 14px; height: 10px; margin-left: 10px; }
.r-tut { font-size: 9px; margin-left: 3px; width: 48px; }
.r-dot { width: 12px; height: 12px; border-radius: 50%; background: #888; }

/* ribbon */
.ribbon { height: 76px; display: flex; flex: none; border-bottom: 1px solid #ddd; position: relative; }
.group { display: flex; flex-direction: column; border-right: 1px solid #e4e4e4; position: relative; }
.items { flex: 1; display: flex; align-items: flex-start; padding-top: 5px; }
.g-sheet { width: 53px; }
.g-view { width: 259px; padding-left: 3px; }
.g-dim { width: 206px; padding-left: 6px; }
.g-ann { width: 396px; padding-left: 5px; }
.g-sk { width: 103px; padding-left: 7px; }
.g-table { width: 86px; padding-left: 4px; }
.g-disp { width: 56px; padding-left: 1px; }
.w30 { width: 30px; } .w34 { width: 34px; } .w36 { width: 36px; } .w38 { width: 38px; } .w40 { width: 40px; } .w41 { width: 41px; } .w44 { width: 44px; } .w52 { width: 52px; } .w53 { width: 53px; } .w56 { width: 54px; } .w64 { width: 64px; } .w68 { width: 68px; } .w74 { width: 74px; } .w82 { width: 82px; }
.big { display: flex; flex-direction: column; align-items: center; flex: none; position: relative; }
.ico { width: 30px; height: 30px; }
.lbl { font-size: 9px; line-height: 11px; text-align: center; margin-top: 3px; white-space: nowrap; color: #555; }
.off .lbl, .off .sm span { color: #cdcdcd; }
.tri { display: inline-block; border-left: 2px solid transparent; border-right: 2px solid transparent; border-top: 3px solid #444; vertical-align: middle; }
.off .tri { border-top-color: #666; }
.small-col { display: flex; flex-direction: column; gap: 12px; padding-top: 5px; padding-left: 3px; flex: none; }
.sm { display: flex; align-items: center; gap: 6px; font-size: 9px; white-space: nowrap; height: 16px; }
.si { width: 18px; height: 14px; }
.g-label { height: 12px; text-align: center; font-size: 9px; line-height: 14px; color: #4f93b3; position: relative; padding-right: 12px; }
.g-c { position: absolute; right: 7px; top: 4px; }
.g-sheet .g-label { text-align: left; padding-left: 8px; padding-right: 0; }
.g-sheet .g-c { right: 5px; }
.svg-note { font: 400 40px "Liberation Serif", serif; fill: #e58a3a; text-anchor: middle; }
.svgt { font: 700 7px "Liberation Sans", sans-serif; fill: #e58a3a; }
.svga { font: 400 10px "Liberation Sans", sans-serif; fill: #e58a3a; text-anchor: middle; }
.svgb { font: 400 12px "Liberation Sans", sans-serif; fill: #e58a3a; text-anchor: middle; }
.grid-mini { display: grid; grid-template-columns: repeat(3, 28px); grid-auto-rows: 29px; justify-items: center; align-items: center; width: 84px; flex: none; }
.mini { width: 22px; height: 22px; }
.a-more { margin-left: 7px; margin-top: 38px; }
.sk-box { width: 78px; height: 56px; border: 1px solid #ececec; padding: 0 1px; flex: none; }
.sk-ico { width: 76px; height: 54px; }
.sk-arrows { display: flex; flex-direction: column; align-items: center; justify-content: space-between; margin-left: 4px; height: 50px; padding-top: 6px; width: 9px; }
.sk-m { width: 6px; height: 7px; }
.rib-more { position: absolute; left: 1346px; top: 66px; }
.g-disp .g-label { text-align: left; padding-left: 5px; padding-right: 0; }
.g-disp .g-c { right: 7px; top: 2px; }

/* selection bar */
.selbar { height: 24px; flex: none; display: flex; align-items: center; border-bottom: 2px solid #c8c8c8; position: relative; padding: 2px 0 0 10px; }
.menu-ico { width: 10px; height: 8px; margin-right: 5px; }
.menu-lbl { font-size: 9.5px; margin-right: 4px; }
.sep { width: 1px; height: 17px; background: #e4e4e4; margin: 0 10px 0 8px; }
.combo { height: 18px; border: 1px solid #bbb; font-size: 9.5px; line-height: 16px; padding-left: 2px; color: #444; display: flex; align-items: center; justify-content: space-between; padding-right: 4px; flex: none; }
.c1 { width: 116px; margin-right: 8px; }
.c2 { width: 121px; margin-right: 8px; }
.dk { border-top-color: #222; }
.sb { width: 14px; height: 14px; margin-right: 3px; }
.sb2 { margin-left: 10px; margin-right: 7px; }
.sb3 { margin-right: 8px; }
.sb4 { width: 16px; height: 16px; }
.sb5 { margin-left: 10px; margin-right: 8px; }
.sb6 { margin-right: 9px; }
.sel-more { position: absolute; left: 1346px; top: 11px; }

/* main */
.main { flex: 1; display: flex; min-height: 0; }
.rail { width: 27px; background: #d9d9d9; display: flex; flex-direction: column; flex: none; }
.rb { height: 24px; display: flex; align-items: center; justify-content: center; flex: none; margin-top: 11px; padding-left: 1px; }
.rb:nth-child(1) { margin-top: 0; padding-right: 3px; padding-left: 0; }
.rb:nth-child(2) { margin-top: 18px; }
.rb:nth-child(3) { margin-top: 12px; }
.rb:nth-child(5) { margin-top: 4px; }
.rb:nth-child(6) { margin-top: 9px; }
.rb:nth-child(7) { margin-top: 15px; }
.rb:nth-child(9) { margin-top: 24px; }
.rb:nth-child(10) { margin-top: 21px; }
.rb:nth-child(11) { margin-top: 10px; }
.rb:nth-child(12) { margin-top: 23px; }
.rb:nth-child(13) { margin-top: 12px; }
.rail-g { width: 13px; height: 13px; }
.ri { width: 21px; height: 21px; }
.rb.rail-act { margin-left: 3px; height: 37px; margin-top: 7px; background: #fff; padding-left: 0; }

.nav { width: 174px; flex: none; display: flex; flex-direction: column; border-right: 2px solid #bdbdbd; padding-left: 5px; }
.nav-head { height: 26px; display: flex; align-items: center; justify-content: space-between; padding: 0 13px 0 4px; font-size: 9.5px; flex: none; }
.nav-max { width: 10px; height: 9px; border: 1px solid #444; border-top-width: 2px; }
.tree { flex: 1; width: 159px; position: relative; overflow: hidden; min-height: 0; border: 1px solid #efefef; border-top: 0; background: repeating-linear-gradient(#fff 0 17px, #f8f8f8 17px 34px); }
.tree-head { height: 16px; background: #f0f0f0; font-size: 9.5px; line-height: 16px; padding-left: 6px; }
.tree-head .caret { margin-left: 5px; vertical-align: middle; }
.tree-lines { position: absolute; left: 1px; top: 16px; width: 60px; height: 240px; }
.row { height: 17px; display: flex; align-items: center; font-size: 9.5px; white-space: nowrap; color: #4d4d4d; position: relative; }
.r0 { padding-left: 1px; }
.r1 { padding-left: 17px; }
.r2 { padding-left: 33px; }
.exp { width: 16px; flex: none; text-align: center; font: 400 9px/9px "Liberation Sans", sans-serif; color: #444; }
.ti { width: 14px; height: 14px; }
.row span { margin-left: 2px; }
.dim span { color: #c2c2c2; }
.strong span { font-weight: 700; color: #444; }
.hscroll { height: 16px; background: #f0f0f0; width: 159px; display: flex; align-items: center; flex: none; justify-content: space-between; padding: 0 5px; }
.hscroll .arrow { font: 700 13px/14px "Liberation Sans", sans-serif; color: #444; }
.thumb { width: 45px; height: 13px; background: #c8c8c8; margin-right: 82px; }
.hbar { height: 5px; width: 159px; background: #bfbfbf; flex: none; }
.acc { width: 159px; height: 20.2px; border-bottom: 1px solid #d4d4d4; display: flex; align-items: center; justify-content: space-between; font-size: 11px; color: #5a9ab6; padding: 0 6px; flex: none; }
.chev { width: 10px; height: 7px; }

.work { flex: 1; display: flex; flex-direction: column; min-width: 0; }
.doctabs { height: 18px; display: flex; border-bottom: 2px solid #7ea9c3; flex: none; font-size: 10px; color: #555; }
.dt { display: flex; align-items: center; white-space: nowrap; height: 17px; flex: none; }
.dti { width: 12px; height: 12px; margin-right: 3px; }
.w14 { width: 14px; }
.d1 { padding-left: 6px; width: 113px; }
.d2 { width: 129px; }
.d3 { width: 113px; }
.dts { width: 10px; height: 11px; margin-left: 5px; }
.active { background: #4f9fca; color: #d8eef8; width: 141px; padding-left: 5px; }
.dtx { width: 9px; height: 9px; margin-left: 4px; }
.canvas { flex: 1; position: relative; min-height: 0; }
.model { position: absolute; left: 0; top: 0; width: 1125px; height: 573px; }
.ax { position: absolute; font: 400 9px/9px "Liberation Sans", sans-serif; filter: blur(.3px); }
.ax-z { left: 44px; top: 487px; color: #3b78c8; }
.ax-x { left: 11px; top: 525px; color: #d96060; }
.ax-y { left: 60px; top: 525px; color: #4a8a4a; font-style: italic; }
.callout { position: absolute; left: 510px; top: 111px; width: 98px; height: 92px; }
.callout-shape { width: 98px; height: 92px; }
.callout-text { position: absolute; left: 15px; top: 12px; font: 500 24px/30px "Noto Sans CJK TC", sans-serif; color: #000; white-space: nowrap; }

.rtools { width: 31px; flex: none; display: flex; flex-direction: column; align-items: center; padding: 8px 5px 0 0; border-left: 1px solid #eee; }
.rtools > * { height: 20px; margin-top: 3.5px; margin-bottom: 3.8px; }
.rt { width: 20px; }
.rt-a { font: 400 27px/20px "Liberation Serif", serif; color: #e58a3a; display: block; }
.rt-edit { position: relative; width: 20px; text-align: center; }
.rt-br { position: absolute; left: 8px; top: 6px; width: 14px; height: 12px; }
```
